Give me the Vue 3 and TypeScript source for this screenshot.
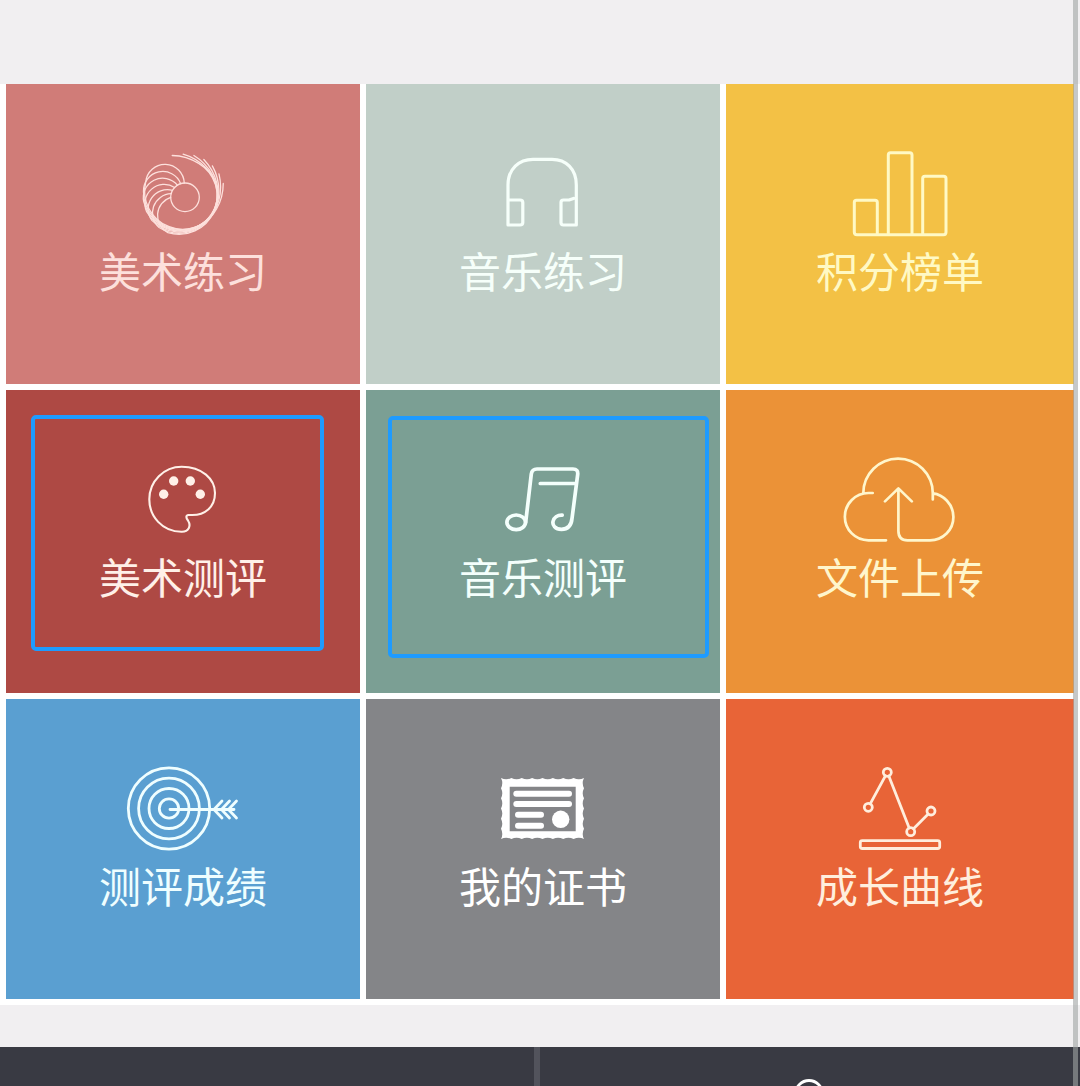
<script setup lang="ts">
import { ref } from "vue";

type Tile = {
  icon: string;
  label: string;
  marked?: boolean;
};

const tiles = ref<Tile[]>([
  { icon: "art", label: "美术练习" },
  { icon: "headphones", label: "音乐练习" },
  { icon: "bars", label: "积分榜单" },
  { icon: "palette", label: "美术测评", marked: true },
  { icon: "music", label: "音乐测评", marked: true },
  { icon: "upload", label: "文件上传" },
  { icon: "target", label: "测评成绩" },
  { icon: "certificate", label: "我的证书" },
  { icon: "curve", label: "成长曲线" },
]);

const polar = (cx: number, cy: number, r: number, deg: number) => {
  const a = (deg * Math.PI) / 180;
  return [cx + r * Math.cos(a), cy + r * Math.sin(a)];
};
const pt = (p: number[]) => p.map((n) => n.toFixed(2)).join(" ");

// feather lines around the small circle, each one turned a bit further
const feathers = Array.from({ length: 7 }, (_, k) => {
  const turn = 14.5 * k;
  const [cx, cy] = polar(60.6, 51.6, 4.6, -100 - turn);
  const start = polar(62, 53.3, 14.3, -93 - turn);
  const left = polar(cx, cy, 38.2, -166 - turn);
  const right = polar(cx, cy, 38.2, 28 - turn);
  const tip = polar(62, 53.3, 40.7 + k * 0.5, -20 - turn);
  return `M${pt(start)}A19.3 19.3 0 0 0 ${pt(left)}A38.2 38.2 0 0 0 ${pt(right)}A52 52 0 0 0 ${pt(tip)}`;
});

// wavy edge of the certificate
const scallop = () => {
  const w = 83 / 8;
  const h = 61 / 6;
  let d = "M18 19";
  for (let i = 0; i < 8; i++) d += `q${w / 2} 2.6 ${w} 0`;
  for (let i = 0; i < 6; i++) d += `q-2.6 ${h / 2} 0 ${h}`;
  for (let i = 0; i < 8; i++) d += `q${-w / 2} -2.6 ${-w} 0`;
  for (let i = 0; i < 6; i++) d += `q2.6 ${-h / 2} 0 ${-h}`;
  return d + "zM26.7 27.7V72.3H92.7V27.7z";
};
const certificate = scallop();
</script>

<template>
  <div class="page">
    <main class="grid">
      <div v-for="tile in tiles" :key="tile.label" class="tile" :class="tile.icon">
        <svg class="icon" viewBox="0 0 120 100">
          <g v-if="tile.icon === 'art'" stroke-width="1.3">
            <circle cx="62" cy="53.3" r="14.3" />
            <path v-for="d in feathers" :key="d" :d="d" />
          </g>
          <g v-else-if="tile.icon === 'headphones'" stroke-width="3.2">
            <path
              d="M25 56H37Q39.8 56 39.8 58.5V78.5Q39.8 81 37 81H25V41C25 25 36 15.3 50 15.3H69C83 15.3 93.3 25 93.3 41V81H80.5Q78 81 78 78.5V58.5Q78 56 80.5 56H86L90.5 54.5"
            />
          </g>
          <g v-else-if="tile.icon === 'bars'" stroke-width="3">
            <path
              d="M37.3 90.7V58.5Q37.3 56.3 35 56.3H16.5Q14.3 56.3 14.3 58.5V88Q14.3 90.7 17 90.7H103.5Q106 90.7 106 88V34.5Q106 32.3 103.5 32.3H85Q82.7 32.3 82.7 34.5V90.7M48.3 90.7V11Q48.3 8.7 50.5 8.7H69.8Q72 8.7 72 11V90.7"
            />
          </g>
          <g v-else-if="tile.icon === 'palette'" stroke-width="2.1">
            <path
              d="M58.7 16.7C79 16.7 92 29 92 43C92 57 82 65.5 68 65H65.5C62.5 65.3 63 68 65 70.5C68.5 76 65.5 81.7 59 81.7C39 82 26.3 66 26.3 49.3C26.3 31 41 16.7 58.7 16.7Z"
            />
            <g class="solid">
              <circle cx="40.7" cy="44.3" r="4.7" />
              <circle cx="50.7" cy="31" r="4.7" />
              <circle cx="67.3" cy="31" r="4.7" />
              <circle cx="77.3" cy="44.3" r="4.7" />
            </g>
          </g>
          <g v-else-if="tile.icon === 'music'" stroke-width="3.7">
            <ellipse cx="33.2" cy="72.3" rx="9.3" ry="7.3" />
            <path
              d="M42.7 72.3L48.3 24Q49 19 54 19H90Q95.3 19 94.7 24.5L89 68.5C88.3 76 84 79.3 78.5 79.3C72 79.3 69.3 75 70 71.5C70.8 67.5 74.5 65 79.2 65.2M57.3 33.5H93"
            />
          </g>
          <g v-else-if="tile.icon === 'upload'" stroke-width="2.7">
            <path
              d="M32.7 43H28.5A23.6 23.6 0 0 0 28.5 90.3H46M23.3 43.3A34.7 34.7 0 0 1 92.8 43.3V49.5M93 43.3C103 44.5 113.4 54 113.4 67C113.4 80 103 90.3 90 90.3H67.5Q58.4 90.3 58.4 81V38.6M45 51.4L58.4 38.4L71.8 51.4"
            />
          </g>
          <g v-else-if="tile.icon === 'target'" stroke-width="2.8">
            <circle cx="46" cy="49.5" r="40.7" />
            <circle cx="46" cy="49.5" r="30.4" />
            <circle cx="46" cy="49.5" r="20" />
            <circle cx="46" cy="49.5" r="9.7" />
            <path
              d="M47 50.5H111M99 42L91 50.5L99 59M106.5 42L98.5 50.5L106.5 59M113.5 42L105.5 50.5L113.5 59"
            />
          </g>
          <g v-else-if="tile.icon === 'certificate'" class="solid">
            <path :d="certificate" fill-rule="evenodd" />
            <rect x="30.3" y="31.7" width="58.7" height="6" rx="3" />
            <rect x="30.3" y="42" width="58.7" height="6" rx="3" />
            <rect x="32" y="52.7" width="29" height="6" rx="3" />
            <rect x="32" y="63.7" width="29" height="6" rx="3" />
            <circle cx="77.7" cy="60.3" r="8.7" />
          </g>
          <g v-else stroke-width="2.8">
            <circle cx="28.3" cy="48.3" r="4" />
            <circle cx="47.3" cy="13.3" r="4" />
            <circle cx="70.7" cy="72.7" r="4" />
            <circle cx="91" cy="52" r="4" />
            <path d="M30.2 44.8L45.4 16.8M48.8 17L69.2 69M73.5 69.8L88.2 54.9" />
            <rect x="20.3" y="81.6" width="79.4" height="7.9" rx="2" />
          </g>
        </svg>
        <span class="label">{{ tile.label }}</span>
        <div v-if="tile.marked" class="mark"></div>
      </div>
    </main>

    <footer class="tabbar">
      <div class="tab"></div>
      <div class="tab">
        <svg class="user" viewBox="0 0 32 32">
          <circle cx="16" cy="16" r="13.5" />
        </svg>
      </div>
    </footer>

    <div class="scrollbar"></div>
  </div>
</template>

<style>
body {
  margin: 0;
}
</style>

<style scoped>
.page {
  position: relative;
  display: flex;
  flex-direction: column;
  justify-content: space-between;
  width: 1080px;
  height: 1086px;
  padding-top: 84px;
  box-sizing: border-box;
  overflow: hidden;
  background: #f1eff1;
  font-family: "Noto Sans CJK SC", sans-serif;
}

.grid {
  display: grid;
  grid-template-columns: 354px 354px 348px;
  grid-template-rows: 300px 303px 300px;
  gap: 6px;
  padding: 0 6px 6px;
  background: #ffffff;
}

.tile {
  position: relative;
  display: flex;
  flex-direction: column;
  align-items: center;
  padding-top: 60px;
  box-sizing: border-box;
}

.icon {
  width: 120px;
  height: 100px;
  fill: none;
  stroke: currentColor;
  stroke-linecap: round;
  stroke-linejoin: round;
}
.solid {
  fill: currentColor;
  stroke: none;
}

.label {
  font-size: 42px;
  line-height: 52px;
  white-space: nowrap;
}

.art {
  background: #d07c78;
  color: #fde0dc;
}
.headphones {
  background: #c1cfc8;
  color: #f6fffa;
}
.bars {
  background: #f3c145;
  color: #fff9c4;
}
.palette {
  background: #ae4944;
  color: #fff0e8;
}
.music {
  background: #7b9f94;
  color: #f4fffc;
}
.upload {
  background: #eb9237;
  color: #fff6cc;
}
.target {
  background: #5a9fd1;
  color: #effeff;
}
.certificate {
  background: #848588;
  color: #ffffff;
}
.curve {
  background: #e86437;
  color: #ffeedd;
}

/* highlight frames over the two test tiles */
.mark {
  position: absolute;
  box-sizing: border-box;
  border: 4px solid #1e9bff;
  border-radius: 5px;
}
.palette .mark {
  top: 25px;
  left: 25px;
  width: 293px;
  height: 236px;
}
.music .mark {
  top: 26px;
  left: 22px;
  width: 321px;
  height: 242px;
}

.tabbar {
  display: flex;
  gap: 6px;
  height: 39px;
  background: #52535c;
}
.tab {
  display: flex;
  flex: 0 0 534px;
  justify-content: center;
  overflow: hidden;
  background: #393a43;
}
.tab + .tab {
  flex: 0 0 540px;
}
.user {
  flex: none;
  width: 32px;
  height: 32px;
  margin-top: 31px;
  margin-right: 3px;
  fill: none;
  stroke: #ffffff;
  stroke-width: 2.8;
}

.scrollbar {
  position: absolute;
  top: 0;
  right: 2px;
  width: 5px;
  height: 100%;
  background: rgba(160, 164, 164, 0.6);
}
</style>
